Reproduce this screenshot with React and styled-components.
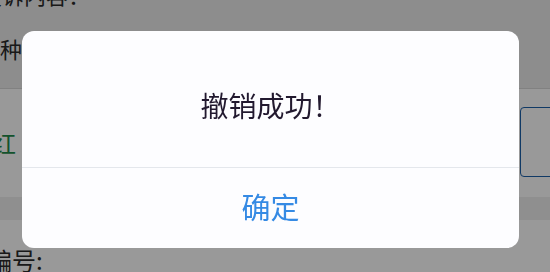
import React from 'react';
import styled, { createGlobalStyle } from 'styled-components';

const GlobalStyle = createGlobalStyle`
  html, body {
    margin: 0;
    padding: 0;
    width: 550px;
    height: 272px;
    overflow: hidden;
    background: #ffffff;
    font-family: "Noto Sans CJK SC", "Noto Sans", sans-serif;
  }
`;

// Page underneath the mask

const Page = styled.div`
  width: 550px;
  height: 272px;
  display: flex;
  flex-direction: column;
  overflow: hidden;
  color: #2b2b2b;
  font-size: 22px;
  line-height: 1;
`;

const TopRow = styled.div`
  background: #ebebeb;
  display: flex;
  flex-direction: column;
  gap: 32px;
  margin-top: -17px;
  height: 109px;
`;

const Line = styled.div`
  white-space: nowrap;
  margin-left: ${({ $shift }) => $shift}px;
  color: ${({ $color }) => $color || 'inherit'};
  font-size: ${({ $size }) => ($size ? `${$size}px` : 'inherit')};
`;

const MidRow = styled.div`
  height: 112px;
  border-top: 1px solid #d8d8d8;
  background: #ffffff;
  display: flex;
  align-items: center;
  justify-content: space-between;
`;

const ActionButton = styled.div`
  width: 120px;
  height: 70px;
  margin-right: -90px;
  margin-top: -2px;
  border: 1px solid #1c5fa8;
  border-radius: 4px;
  display: flex;
  align-items: center;
  padding-left: 58px;
  box-sizing: border-box;
  color: #1c62b4;
  font-size: 24px;
`;

const Band = styled.div`
  height: 24px;
  background: #eeeeee;
`;

const BottomRow = styled.div`
  flex: 1;
  padding-top: 28px;
`;

// Mask and alert

const Mask = styled.div`
  position: fixed;
  inset: 0;
  background: rgba(0, 0, 0, 0.4);
  display: flex;
  padding: 31px 31px 24px 22px;
  box-sizing: border-box;
`;

const Alert = styled.div`
  flex: 1;
  background: #fdfdff;
  border-radius: 12px;
  display: flex;
  flex-direction: column;
  overflow: hidden;
`;

const Message = styled.div`
  height: 137px;
  box-sizing: border-box;
  padding-top: 12px;
  display: flex;
  align-items: center;
  justify-content: center;
  font-size: 28px;
  color: #22192f;
  border-bottom: 1px solid #e4e7ec;
`;

const Confirm = styled.div`
  flex: 1;
  display: flex;
  align-items: center;
  justify-content: center;
  padding-bottom: 4px;
  font-size: 29px;
  color: #358ae4;
`;

export default function App() {
  return (
    <>
      <GlobalStyle />
      <Page>
        <TopRow>
          <Line $shift={-20}>投诉内容：</Line>
          <Line $shift={-22}>品种</Line>
        </TopRow>
        <MidRow>
          <Line $shift={-8} $size={24} $color="#1f8a4a">红</Line>
          <ActionButton>撤销</ActionButton>
        </MidRow>
        <Band />
        <BottomRow>
          <Line $shift={-12} $size={24}>编号:</Line>
        </BottomRow>
      </Page>
      <Mask>
        <Alert>
          <Message>撤销成功！</Message>
          <Confirm>确定</Confirm>
        </Alert>
      </Mask>
    </>
  );
}
